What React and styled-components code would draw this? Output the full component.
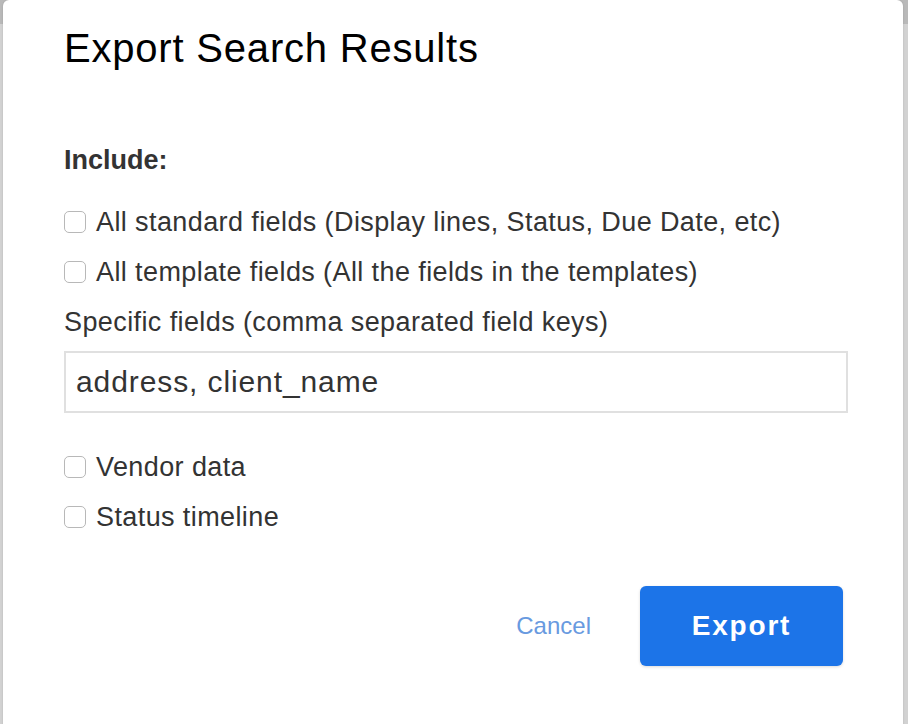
import styled, { createGlobalStyle } from 'styled-components'

const GlobalStyle = createGlobalStyle`
  html, body {
    margin: 0;
    padding: 0;
    background: #cfcfcf;
    overflow: hidden;
  }
  * {
    box-sizing: border-box;
  }
`

const Backdrop = styled.div`
  width: 908px;
  height: 724px;
  padding: 0 5px 0 3px;
  background: linear-gradient(to bottom, #b9b9b9 0, #b9b9b9 24px, #d2d2d2 24px);
`

const Modal = styled.div`
  height: 760px;
  background: #fff;
  border-radius: 6px 6px 0 0;
  padding: 24px 56px 0 61px;
  font-family: 'Liberation Sans', Arial, Helvetica, sans-serif;
  color: #333;
  box-shadow: 0 0 2px rgba(0, 0, 0, 0.15);
`

const Title = styled.h1`
  margin: 0;
  font-size: 40px;
  line-height: 1.2;
  font-weight: 400;
  letter-spacing: 0.8px;
  color: #000;
`

const SectionLabel = styled.div`
  margin-top: 72px;
  font-size: 27px;
  line-height: 1.2;
  font-weight: 700;
  color: #333;
`

const Options = styled.div`
  display: flex;
  flex-direction: column;
  margin-top: ${({ offset }) => offset}px;
`

const Option = styled.label`
  display: flex;
  align-items: center;
  gap: 10px;
  height: 50px;
  font-size: 27px;
  letter-spacing: 0.4px;
  color: #333;
  cursor: pointer;
`

const Checkbox = styled.input.attrs({ type: 'checkbox' })`
  appearance: none;
  margin: 0;
  width: 22px;
  height: 22px;
  border: 1px solid #b8b8b8;
  border-radius: 5px;
  background: #fff;
  flex-shrink: 0;
`

const FieldLabel = styled.div`
  display: flex;
  align-items: center;
  height: 50px;
  font-size: 27px;
  letter-spacing: 0.4px;
  color: #333;
`

const FieldInput = styled.input`
  display: block;
  width: 784px;
  height: 62px;
  margin-top: 4px;
  padding: 0 10px;
  border: 2px solid #e0e0e0;
  border-radius: 0;
  font-family: inherit;
  font-size: 30px;
  letter-spacing: 0.9px;
  color: #333;
  outline: none;
`

const Footer = styled.div`
  display: flex;
  justify-content: flex-end;
  align-items: center;
  gap: 49px;
  margin-top: 44px;
  padding-right: 4px;
`

const CancelButton = styled.button`
  border: 0;
  background: none;
  padding: 0;
  font-family: inherit;
  font-size: 24px;
  color: #689ae0;
  cursor: pointer;
`

const ExportButton = styled.button`
  width: 203px;
  height: 80px;
  border: 0;
  border-radius: 6px;
  background: #1c74e8;
  color: #fff;
  font-family: inherit;
  font-size: 28px;
  font-weight: 700;
  letter-spacing: 1.8px;
  box-shadow: 0 1px 3px rgba(0, 0, 0, 0.15);
  cursor: pointer;
`

const topOptions = [
  'All standard fields (Display lines, Status, Due Date, etc)',
  'All template fields (All the fields in the templates)',
]

const bottomOptions = ['Vendor data', 'Status timeline']

export default function App() {
  return (
    <>
      <GlobalStyle />
      <Backdrop>
        <Modal>
          <Title>Export Search Results</Title>
          <SectionLabel>Include:</SectionLabel>
          <Options offset={21}>
            {topOptions.map((text) => (
              <Option key={text}>
                <Checkbox />
                {text}
              </Option>
            ))}
            <FieldLabel>Specific fields (comma separated field keys)</FieldLabel>
          </Options>
          <FieldInput defaultValue="address, client_name" />
          <Options offset={29}>
            {bottomOptions.map((text) => (
              <Option key={text}>
                <Checkbox />
                {text}
              </Option>
            ))}
          </Options>
          <Footer>
            <CancelButton>Cancel</CancelButton>
            <ExportButton>Export</ExportButton>
          </Footer>
        </Modal>
      </Backdrop>
    </>
  )
}
